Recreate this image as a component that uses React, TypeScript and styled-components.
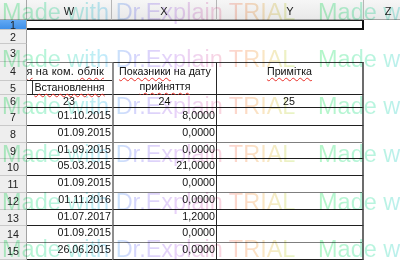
import React from "react";
import styled, { createGlobalStyle } from "styled-components";

const Global = createGlobalStyle`
  *, *::before, *::after { box-sizing: border-box; }
  html, body { margin: 0; padding: 0; background: #fff; }
  body { overflow: hidden; font-family: "Liberation Sans", Arial, sans-serif; }
`;

type Rule = "dark" | "soft";
const ruleColor = (r: Rule) => (r === "soft" ? "#7f7f7f" : "#1f1f1f");

const ROWS = [20, 10, 14, 18, 19, 14, 13, 18, 17, 16, 17, 17, 17, 16, 17, 17, 17];

const Page = styled.div`
  position: relative;
  width: 400px;
  height: 260px;
  overflow: hidden;
  background: #fff;
`;

const Sheet = styled.div`
  display: grid;
  width: 412px;
  grid-template-columns: 27px 85px 105px 147px 1fr;
  grid-template-rows: ${ROWS.map((r) => `${r}px`).join(" ")};
  font-family: "Liberation Sans", Arial, sans-serif;
  font-size: 10.7px;
  color: #111;
`;

const Corner = styled.div`
  background: linear-gradient(#f6f6f6, #e9e9e9);
  border-right: 1px solid #a8a8a8;
  border-bottom: 1px solid #a5a5a5;
`;

const ColHead = styled.div<{ $last?: boolean }>`
  display: flex;
  align-items: center;
  justify-content: center;
  padding-top: 2px;
  background: linear-gradient(#f6f6f6, #e9e9e9);
  border-right: ${(p) => (p.$last ? "none" : "1px solid #b6b6b6")};
  border-bottom: 1px solid #a5a5a5;
  font-size: 11px;
  color: #222;
`;

const RowHead = styled.div<{ $active?: boolean }>`
  display: flex;
  align-items: center;
  justify-content: center;
  background: ${(p) => (p.$active ? "linear-gradient(#62a9f4, #3f90e8)" : "#eeeeee")};
  border-right: 1px solid #a2a2a2;
  border-bottom: 1px solid #c9c9c9;
  color: #222;
  font-size: 10.7px;
`;

const Blank = styled.div<{ $span?: number }>`
  grid-column: span ${(p) => p.$span ?? 1};
  background: #fff;
`;

const FrameCell = styled.div`
  grid-column: span 3;
  background: #fff;
  border-top: 1px solid #222;
  border-bottom: 2px solid #111;
  border-right: 2px solid #111;
`;

const CaptionCell = styled.div`
  display: flex;
  align-items: center;
  justify-content: flex-end;
  padding: 0 8px 2px 0;
  overflow: hidden;
  white-space: nowrap;
  font-size: 11px;
  letter-spacing: 0.2px;
  border-top: 1px solid #7a7a7a;
  border-bottom: 1px solid #222;
  background: #fff;
`;

const SubCaption = styled.div`
  position: relative;
  display: flex;
  align-items: center;
  justify-content: center;
  padding-bottom: 1px;
  white-space: nowrap;
  border-bottom: 1px solid #222;
  background: #fff;
  &::before {
    content: "";
    position: absolute;
    left: 5px;
    top: 0;
    bottom: 0;
    width: 1px;
    background: #333;
  }
`;

const MergedHead = styled.div<{ $note?: boolean }>`
  grid-row: span 2;
  display: flex;
  flex-direction: column;
  align-items: center;
  text-align: center;
  padding-top: 1px;
  line-height: 15px;
  white-space: nowrap;
  background: #fff;
  border-top: 1px solid #3a3a3a;
  border-bottom: 1px solid #1f1f1f;
  border-left: ${(p) => (p.$note ? "none" : "2px solid #8e8e8e")};
  border-right: ${(p) => (p.$note ? "2px solid #6c6c6c" : "1px solid #262626")};
`;

const BodyCell = styled.div<{ $rule: Rule; $center?: boolean; $raise?: boolean }>`
  display: flex;
  align-items: center;
  justify-content: ${(p) => (p.$center ? "center" : "flex-end")};
  padding: 0 1px ${(p) => (p.$raise ? 4 : 0)}px 0;
  white-space: nowrap;
  overflow: hidden;
  background: #fff;
  border-bottom: 1px solid ${(p) => ruleColor(p.$rule)};
`;

const DateCell = styled(BodyCell)``;

const ValueCell = styled(BodyCell)`
  border-left: 2px solid #8e8e8e;
  border-right: 1px solid #262626;
`;

const NoteCell = styled(BodyCell)`
  border-right: 2px solid #6c6c6c;
`;

const Misspelt = styled.span`
  text-decoration: underline wavy #e8302a;
  text-decoration-thickness: 1px;
  text-underline-offset: 2px;
  text-decoration-skip-ink: none;
`;

const WatermarkLayer = styled.div`
  position: absolute;
  inset: 0;
  pointer-events: none;
  overflow: hidden;
`;

const WatermarkLine = styled.div`
  position: absolute;
  left: 2px;
  display: flex;
  font-family: "Liberation Sans", Arial, sans-serif;
  font-size: 23.5px;
  line-height: 24px;
  white-space: nowrap;
  mix-blend-mode: multiply;
`;

const WatermarkPhrase = styled.span`
  flex: 0 0 316px;
  color: transparent;
  background-image: linear-gradient(
    90deg,
    #b4f6c8 0px,
    #b8f4e0 60px,
    #c0ecfa 100px,
    #d6d4fc 135px,
    #e8d2f8 175px,
    #f8d4e4 215px,
    #fdd8c4 240px,
    #f9e8c4 265px,
    #e6f6c4 295px
  );
  -webkit-background-clip: text;
  background-clip: text;
`;

type DataRow = { n: number; date: string; value: string; rule: Rule };

const data: DataRow[] = [
  { n: 7, date: "01.10.2015", value: "8,0000", rule: "dark" },
  { n: 8, date: "01.09.2015", value: "0,0000", rule: "soft" },
  { n: 9, date: "01.09.2015", value: "0,0000", rule: "dark" },
  { n: 10, date: "05.03.2015", value: "21,0000", rule: "dark" },
  { n: 11, date: "01.09.2015", value: "0,0000", rule: "soft" },
  { n: 12, date: "01.11.2016", value: "0,0000", rule: "dark" },
  { n: 13, date: "01.07.2017", value: "1,2000", rule: "dark" },
  { n: 14, date: "01.09.2015", value: "0,0000", rule: "soft" },
  { n: 15, date: "26.06.2015", value: "0,0000", rule: "dark" },
  { n: 16, date: "01.09.2015", value: "0,0000", rule: "dark" },
];

const watermarkTops = [0, 47, 94, 142, 190, 237];

export default function App() {
  return (
    <Page>
      <Global />
      <Sheet>
        <Corner />
        <ColHead>W</ColHead>
        <ColHead>X</ColHead>
        <ColHead>Y</ColHead>
        <ColHead $last>Z</ColHead>

        <RowHead $active>1</RowHead>
        <FrameCell />
        <Blank />

        <RowHead>2</RowHead>
        <Blank $span={4} />

        <RowHead>3</RowHead>
        <Blank $span={4} />

        <RowHead>4</RowHead>
        <CaptionCell>
          <span>
            Дата <Misspelt>взяття</Misspelt> на ком. <Misspelt>облік</Misspelt>
          </span>
        </CaptionCell>
        <MergedHead>
          <span>
            <Misspelt>Показники</Misspelt> на дату
          </span>
          <Misspelt>прийняття</Misspelt>
        </MergedHead>
        <MergedHead $note>
          <Misspelt>Примітка</Misspelt>
        </MergedHead>
        <Blank />

        <RowHead>5</RowHead>
        <SubCaption>
          <Misspelt>Встановлення</Misspelt>
        </SubCaption>
        <Blank />

        <RowHead>6</RowHead>
        <DateCell $rule="dark" $center>23</DateCell>
        <ValueCell $rule="dark" $center>24</ValueCell>
        <NoteCell $rule="dark" $center>25</NoteCell>
        <Blank />

        {data.map((r) => (
          <React.Fragment key={r.n}>
            <RowHead>{r.n}</RowHead>
            <DateCell $rule={r.rule} $raise>{r.date}</DateCell>
            <ValueCell $rule={r.rule} $raise>{r.value}</ValueCell>
            <NoteCell $rule={r.rule} $raise />
            <Blank />
          </React.Fragment>
        ))}
      </Sheet>
      <WatermarkLayer>
        {watermarkTops.map((t) => (
          <WatermarkLine key={t} style={{ top: t }}>
            <WatermarkPhrase>Made with Dr.Explain TRIAL</WatermarkPhrase>
            <WatermarkPhrase>Made with Dr.Explain TRIAL</WatermarkPhrase>
          </WatermarkLine>
        ))}
      </WatermarkLayer>
    </Page>
  );
}
